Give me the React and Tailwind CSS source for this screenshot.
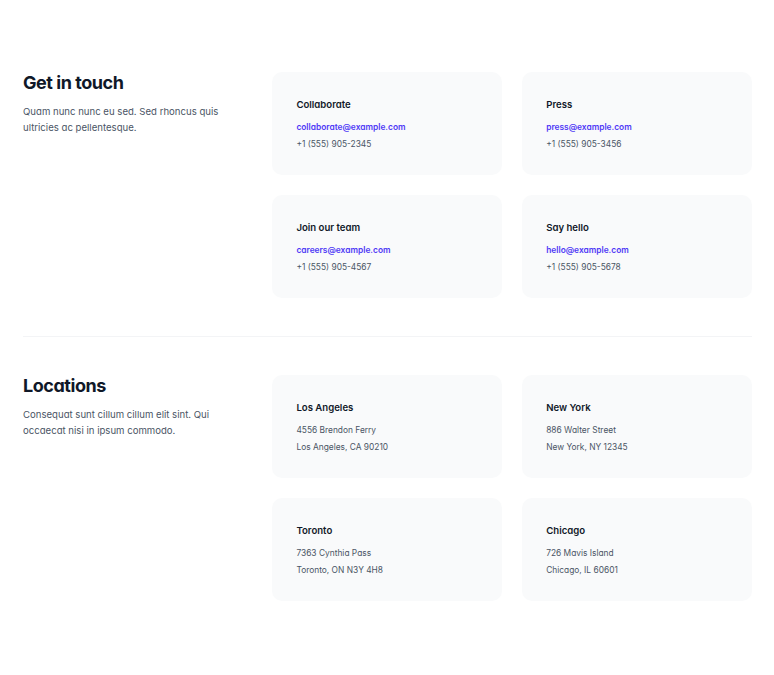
const contacts = [
  { title: "Collaborate", email: "collaborate@example.com", phone: "+1 (555) 905-2345" },
  { title: "Press", email: "press@example.com", phone: "+1 (555) 905-3456" },
  { title: "Join our team", email: "careers@example.com", phone: "+1 (555) 905-4567" },
  { title: "Say hello", email: "hello@example.com", phone: "+1 (555) 905-5678" },
];

const locations = [
  { title: "Los Angeles", lines: ["4556 Brendon Ferry", "Los Angeles, CA 90210"] },
  { title: "New York", lines: ["886 Walter Street", "New York, NY 12345"] },
  { title: "Toronto", lines: ["7363 Cynthia Pass", "Toronto, ON N3Y 4H8"] },
  { title: "Chicago", lines: ["726 Mavis Island", "Chicago, IL 60601"] },
];

function Section({ title, text, children }) {
  return (
    <div className="grid grid-cols-3 gap-x-[19.2px]">
      <div>
        <h2 className="text-[18px] leading-[22px] font-bold tracking-tight text-gray-900">{title}</h2>
        <p className="mt-[9.6px] text-[9.6px] leading-[16.8px] text-gray-600 pr-[10px]">{text}</p>
      </div>
      <div className="col-span-2 grid grid-cols-2 gap-[20px]">{children}</div>
    </div>
  );
}

function Card({ title, children }) {
  return (
    <div className="rounded-[10px] bg-gray-50 px-[24px] pt-[25px] pb-[22px]">
      <h3 className="text-[9.6px] leading-[15px] font-semibold text-gray-900">{title}</h3>
      <div className="mt-[7px] text-[8.4px] leading-[17px] text-gray-600">{children}</div>
    </div>
  );
}

export default function App() {
  return (
    <div className="bg-white min-h-screen font-['Inter',sans-serif] [font-feature-settings:'cv11']">
      <div className="pl-[23px] pr-[22px] pt-[72px] pb-[75px]">
        <Section title="Get in touch" text="Quam nunc nunc eu sed. Sed rhoncus quis ultricies ac pellentesque.">
          {contacts.map((c) => (
            <Card key={c.title} title={c.title}>
              <p>
                <a href="#" className="font-semibold text-indigo-600">{c.email}</a>
              </p>
              <p>{c.phone}</p>
            </Card>
          ))}
        </Section>

        <div className="mt-[38px] border-t border-gray-100 pt-[38px]">
          <Section title="Locations" text="Consequat sunt cillum cillum elit sint. Qui occaecat nisi in ipsum commodo.">
            {locations.map((l) => (
              <Card key={l.title} title={l.title}>
                {l.lines.map((line) => (
                  <p key={line}>{line}</p>
                ))}
              </Card>
            ))}
          </Section>
        </div>
      </div>
    </div>
  );
}
